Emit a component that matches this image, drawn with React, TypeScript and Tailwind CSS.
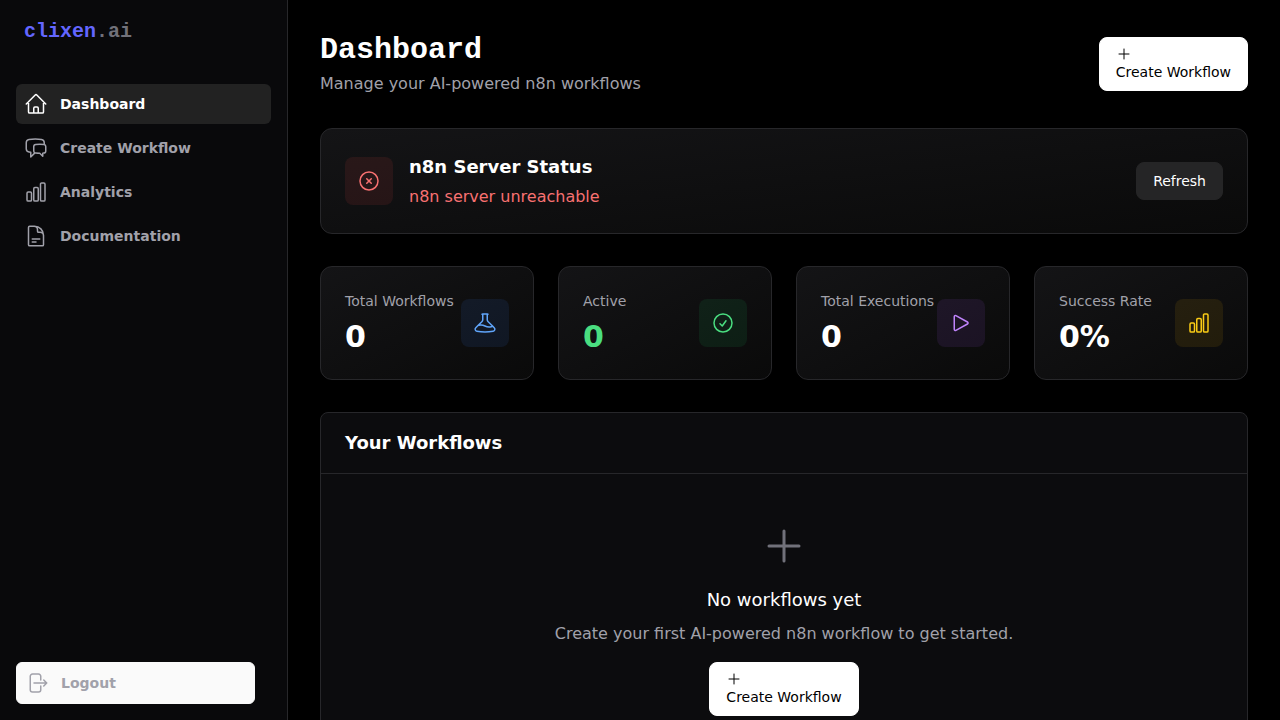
import type { ReactNode } from "react";
import type { IconType } from "react-icons";
import {
  HiOutlineArrowRightOnRectangle,
  HiOutlineBeaker,
  HiOutlineChartBar,
  HiOutlineChatBubbleLeftRight,
  HiOutlineCheckCircle,
  HiOutlineDocumentText,
  HiOutlineHome,
  HiOutlinePlay,
  HiOutlinePlus,
  HiOutlineXCircle,
} from "react-icons/hi2";

const navItems: { label: string; icon: IconType; active?: boolean }[] = [
  { label: "Dashboard", icon: HiOutlineHome, active: true },
  { label: "Create Workflow", icon: HiOutlineChatBubbleLeftRight },
  { label: "Analytics", icon: HiOutlineChartBar },
  { label: "Documentation", icon: HiOutlineDocumentText },
];

const stats: { label: string; value: string; valueClass: string; boxClass: string; icon: IconType }[] = [
  { label: "Total Workflows", value: "0", valueClass: "text-white", boxClass: "bg-[#3b82f6]/10 text-[#60a5fa]", icon: HiOutlineBeaker },
  { label: "Active", value: "0", valueClass: "text-[#4ade80]", boxClass: "bg-[#22c55e]/10 text-[#4ade80]", icon: HiOutlineCheckCircle },
  { label: "Total Executions", value: "0", valueClass: "text-white", boxClass: "bg-[#a855f7]/10 text-[#c084fc]", icon: HiOutlinePlay },
  { label: "Success Rate", value: "0%", valueClass: "text-white", boxClass: "bg-[#eab308]/10 text-[#facc15]", icon: HiOutlineChartBar },
];

function Card({ children }: { children: ReactNode }) {
  return (
    <div className="flex items-center justify-between rounded-xl border border-[#27272a] bg-[linear-gradient(to_bottom_right,#141416,#0a0a0a)] p-6">
      {children}
    </div>
  );
}

function CreateButton() {
  return (
    <button className="rounded-lg border border-white bg-white px-4 py-2 text-left text-sm text-black">
      <HiOutlinePlus className="block size-4" />
      Create Workflow
    </button>
  );
}

function Sidebar() {
  return (
    <aside className="flex w-72 shrink-0 flex-col border-r border-[#27272a] bg-[#09090b]">
      <div className="flex h-16 items-center px-6 font-['Liberation_Mono',monospace] text-xl font-bold">
        <span className="text-[#6366ff]">clixen</span>
        <span className="text-[#71717a]">.ai</span>
      </div>
      <nav className="mt-5 flex flex-1 flex-col gap-1 px-4">
        {navItems.map(({ label, icon: Icon, active }) => (
          <a
            key={label}
            className={`flex h-10 items-center gap-3 rounded-md px-2 text-sm font-semibold ${active ? "bg-[#222222] text-white" : "text-[#a1a1aa]"}`}
          >
            <Icon className="size-6" />
            {label}
          </a>
        ))}
      </nav>
      <div className="p-4 pr-8">
        <button className="flex h-[42px] w-full items-center gap-3 rounded-md border border-[#fafafa] bg-[#fafafa] px-2 text-sm font-semibold text-[#a1a1aa]">
          <HiOutlineArrowRightOnRectangle className="size-6" />
          Logout
        </button>
      </div>
    </aside>
  );
}

export default function App() {
  return (
    <div className="flex h-screen overflow-hidden bg-black font-['DejaVu_Sans',sans-serif] text-white">
      <Sidebar />
      <main className="flex min-w-0 flex-1 flex-col gap-8 overflow-hidden p-8">
        <header className="flex shrink-0 items-center justify-between">
          <div>
            <h1 className="font-['Liberation_Mono',monospace] text-3xl leading-9 font-bold">Dashboard</h1>
            <p className="mt-1 text-[#a1a1aa]">Manage your AI-powered n8n workflows</p>
          </div>
          <CreateButton />
        </header>

        <Card>
          <div className="flex items-center gap-4">
            <div className="flex size-12 items-center justify-center rounded-lg bg-[#ef4444]/10 text-[#f87171]">
              <HiOutlineXCircle className="size-6" />
            </div>
            <div>
              <h3 className="text-lg leading-7 font-semibold">n8n Server Status</h3>
              <p className="mt-1 text-[#f87171]">n8n server unreachable</p>
            </div>
          </div>
          <button className="rounded-lg border border-[#252526] bg-[#252526] px-4 py-2 text-sm">Refresh</button>
        </Card>

        <section className="grid shrink-0 grid-cols-4 gap-6">
          {stats.map(({ label, value, valueClass, boxClass, icon: Icon }) => (
            <Card key={label}>
              <div>
                <p className="text-sm whitespace-nowrap text-[#a1a1aa]">{label}</p>
                <p className={`mt-2 text-3xl leading-9 font-bold ${valueClass}`}>{value}</p>
              </div>
              <div className={`flex size-12 shrink-0 items-center justify-center rounded-lg ${boxClass}`}>
                <Icon className="size-6" />
              </div>
            </Card>
          ))}
        </section>

        <section className="shrink-0 rounded-lg border border-[#27272a] bg-[#0c0c0e]">
          <h2 className="border-b border-[#27272a] px-6 py-4 text-lg leading-7 font-semibold">Your Workflows</h2>
          <div className="flex flex-col items-center py-12">
            <HiOutlinePlus className="size-12 text-[#71717a]" />
            <h3 className="mt-4 text-lg leading-7">No workflows yet</h3>
            <p className="mt-2 mb-4 text-[#a1a1aa]">Create your first AI-powered n8n workflow to get started.</p>
            <CreateButton />
          </div>
        </section>
      </main>
    </div>
  );
}
